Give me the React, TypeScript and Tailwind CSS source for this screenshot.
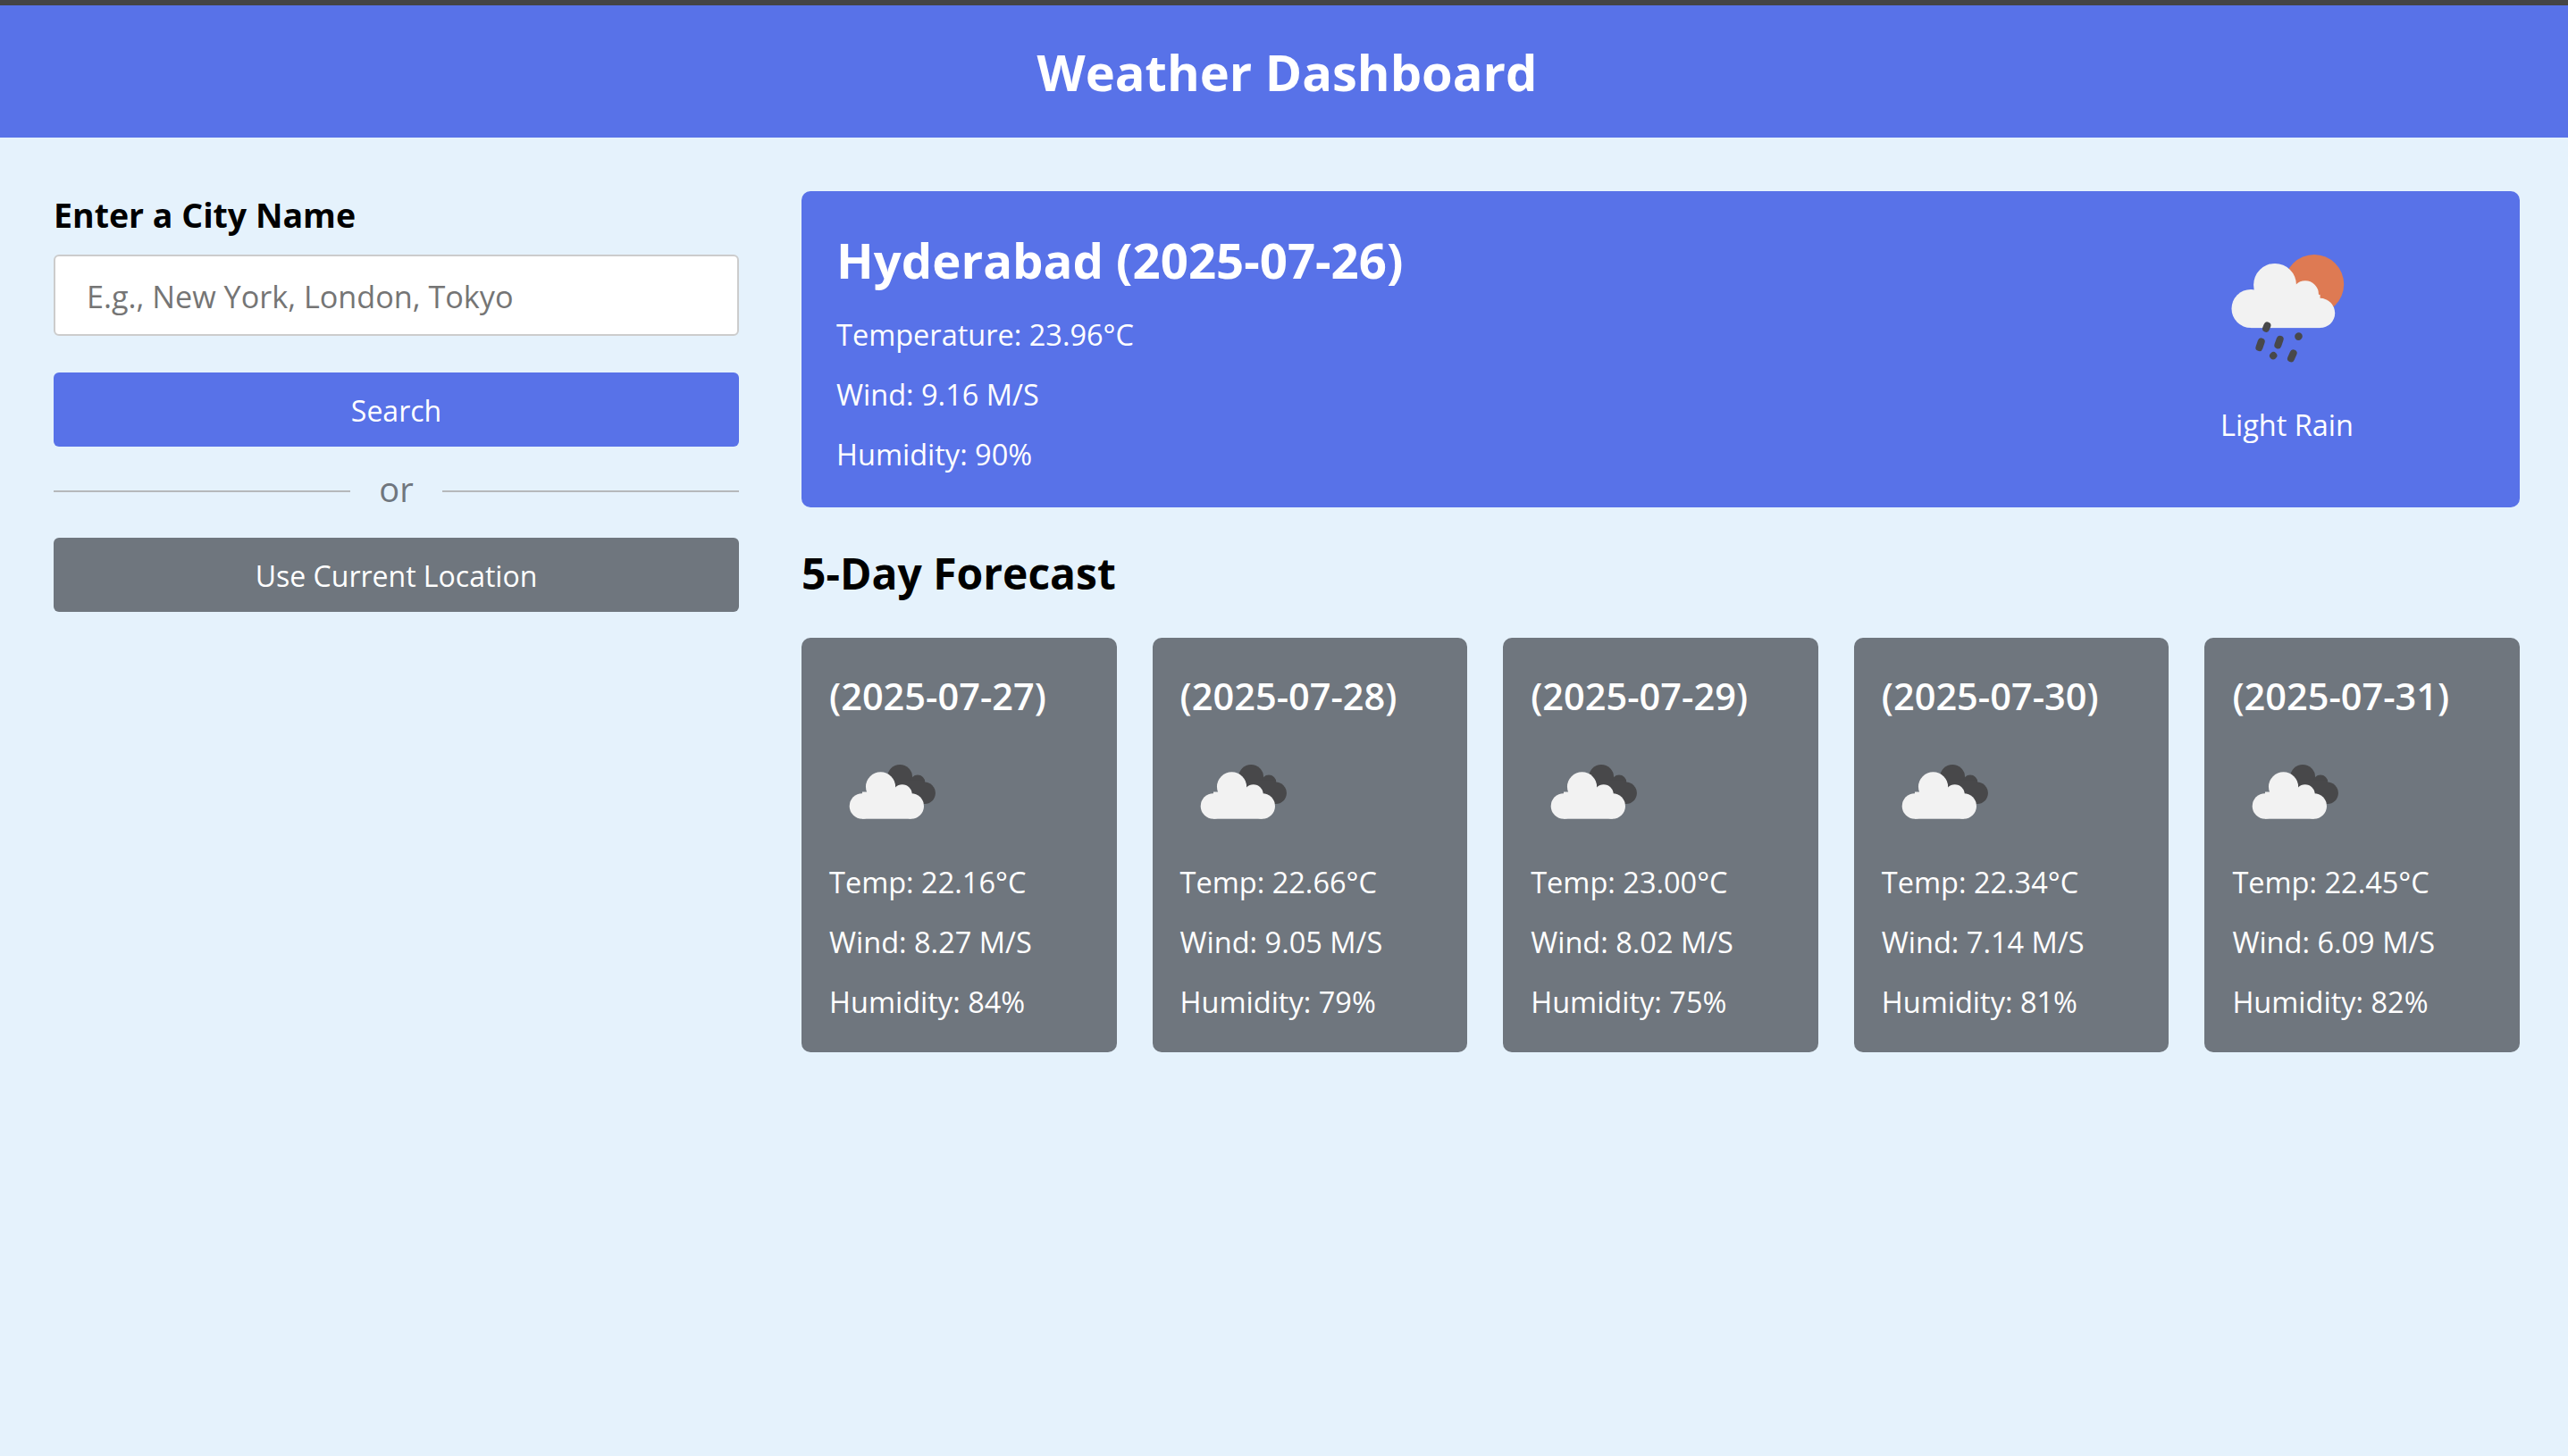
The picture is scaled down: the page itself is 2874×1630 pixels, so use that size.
const forecast = [
  { date: "2025-07-27", temp: "22.16", wind: "8.27", humidity: 84 },
  { date: "2025-07-28", temp: "22.66", wind: "9.05", humidity: 79 },
  { date: "2025-07-29", temp: "23.00", wind: "8.02", humidity: 75 },
  { date: "2025-07-30", temp: "22.34", wind: "7.14", humidity: 81 },
  { date: "2025-07-31", temp: "22.45", wind: "6.09", humidity: 82 },
];

function RainIcon() {
  return (
    <svg width="140" height="133" viewBox="150 90 420 400" className="ml-[2px]">
      <circle cx="450" cy="205" r="100" fill="#de7a53" />
      <g fill="#f2f2f2">
        <circle cx="237" cy="287" r="65" />
        <circle cx="318" cy="207" r="72" />
        <circle cx="420" cy="238" r="45" />
        <circle cx="470" cy="302" r="50" />
        <rect x="237" y="240" width="233" height="112" />
      </g>
      <g stroke="#48484a" strokeLinecap="round" fill="none">
        <path d="M292 344 L288 354" strokeWidth="24" />
        <path d="M272 398 L265 418" strokeWidth="24" />
        <path d="M335 390 L328 410" strokeWidth="24" />
        <path d="M380 437 L372 455" strokeWidth="24" />
        <path d="M398 380 L397 381" strokeWidth="25" />
        <path d="M313 445 L312 446" strokeWidth="24" />
      </g>
    </svg>
  );
}

function CloudsIcon() {
  return (
    <svg width="113" height="73" viewBox="60 60 340 220">
      <g fill="#48484a">
        <circle cx="262" cy="120" r="42" />
        <circle cx="322" cy="138" r="25" />
        <circle cx="345" cy="174" r="37" />
        <rect x="250" y="130" width="90" height="70" />
      </g>
      <g fill="#f2f2f2">
        <circle cx="135" cy="218" r="43" />
        <circle cx="197" cy="153" r="50" />
        <circle cx="270" cy="178" r="33" />
        <circle cx="300" cy="218" r="43" />
        <rect x="135" y="170" width="165" height="91" />
      </g>
    </svg>
  );
}

export default function App() {
  return (
    <div className="min-h-screen bg-[#e5f2fc] font-['Open_Sans',sans-serif]">
      <header className="h-[154px] border-t-[6px] border-[#444444] bg-[#5872e8] pl-[7px] flex items-center justify-center">
        <h1 className="text-[56px] font-bold text-white">Weather Dashboard</h1>
      </header>

      <main className="flex gap-[70px] pt-[60px] pl-[60px] pr-[54px]">
        <div className="w-[767px] shrink-0">
          <h3 className="text-[37.5px] font-bold text-black leading-[54px]">Enter a City Name</h3>
          <input
            type="text"
            placeholder="E.g., New York, London, Tokyo"
            className="mt-[17px] block w-full h-[91px] pl-[35px] pr-[35px] pt-[2px] text-[34.2px] bg-white border-2 border-[#cccccc] rounded-[6px] outline-none placeholder:text-[#757575]"
          />
          <button className="mt-[41px] block w-full h-[83px] pt-[2px] bg-[#5872e8] text-white text-[32px] font-medium rounded-[6px]">
            Search
          </button>
          <div className="mt-[32px] mb-[34px] h-[36px] flex items-center gap-[32px]">
            <div className="flex-1 h-[2px] bg-[#b5b8bb]" />
            <span className="text-[38px] leading-none text-[#6f767e] -mt-[6px]">or</span>
            <div className="flex-1 h-[2px] bg-[#b5b8bb]" />
          </div>
          <button className="block w-full h-[83px] pt-[2px] bg-[#6f767e] text-white text-[32px] font-medium rounded-[6px]">
            Use Current Location
          </button>
        </div>

        <div className="flex-1">
          <section className="h-[354px] bg-[#5872e8] rounded-[10px] pl-[39px] pr-[186px] flex justify-between text-white">
            <div className="pt-[41px]">
              <h2 className="text-[54.5px] font-bold leading-[72px]">Hyderabad (2025-07-26)</h2>
              <p className="mt-[26px] text-[32.5px] font-medium leading-[44px]">Temperature: 23.96°C</p>
              <p className="mt-[23px] text-[32.5px] font-medium leading-[44px]">Wind: 9.16 M/S</p>
              <p className="mt-[23px] text-[32.5px] font-medium leading-[44px]">Humidity: 90%</p>
            </div>
            <div className="pt-[66px] flex flex-col items-center">
              <RainIcon />
              <p className="mt-[41px] text-[32.5px] font-medium leading-[44px]">Light Rain</p>
            </div>
          </section>

          <h2 className="mt-[42px] text-[48px] font-bold text-black leading-[64px]">5-Day Forecast</h2>

          <div className="mt-[40px] flex gap-[40px]">
            {forecast.map((day) => (
              <div key={day.date} className="flex-1 h-[464px] bg-[#6f767e] rounded-[10px] px-[31px] pt-[37px] text-white">
                <h4 className="text-[41.5px] font-semibold leading-[56px]">({day.date})</h4>
                <div className="mt-[43px] ml-[12px]">
                  <CloudsIcon />
                </div>
                <p className="mt-[43px] text-[32.5px] font-medium leading-[44px]">Temp: {day.temp}°C</p>
                <p className="mt-[23px] text-[32.5px] font-medium leading-[44px]">Wind: {day.wind} M/S</p>
                <p className="mt-[23px] text-[32.5px] font-medium leading-[44px]">Humidity: {day.humidity}%</p>
              </div>
            ))}
          </div>
        </div>
      </main>
    </div>
  );
}
